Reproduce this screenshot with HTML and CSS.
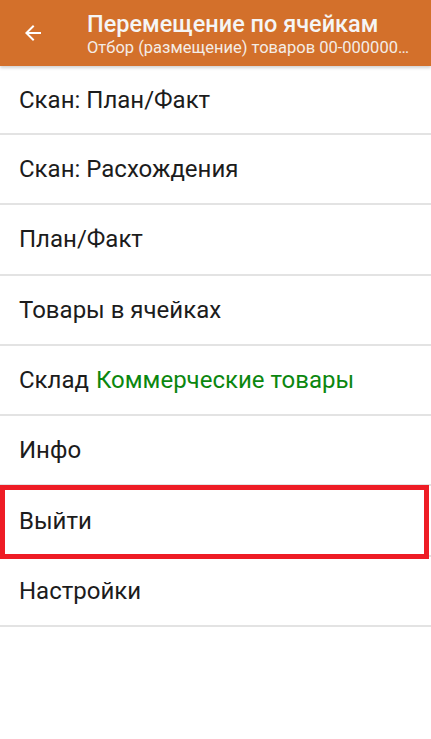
FILE: index.html
```html
<!DOCTYPE html>
<html lang="ru">
<head>
    <meta charset="UTF-8">
    <meta name="viewport" content="width=device-width, initial-scale=1.0">
    <title>Перемещение по ячейкам</title>
    <link rel="stylesheet" href="styles.css">
</head>
<body>
    <header class="toolbar">
        <button class="back" aria-label="Назад">
            <svg width="24" height="24" viewBox="0 0 24 24">
                <path d="M20 11H7.83l5.59-5.59L12 4l-8 8 8 8 1.41-1.41L7.83 13H20v-2z" fill="#fff"/>
            </svg>
        </button>
        <div class="titles">
            <div class="title">Перемещение по ячейкам</div>
            <div class="subtitle">Отбор (размещение) товаров 00-000000…</div>
        </div>
    </header>

    <ul class="menu">
        <li>Скан: План/Факт</li>
        <li>Скан: Расхождения</li>
        <li>План/Факт</li>
        <li>Товары в ячейках</li>
        <li>Склад <span class="green">Коммерческие товары</span></li>
        <li>Инфо</li>
        <li class="marked">Выйти</li>
        <li>Настройки</li>
    </ul>
</body>
</html>
```

FILE: styles.css
```css
body {
    margin: 0;
    font-family: Roboto, "Noto Sans", sans-serif;
    background-color: #fff;
    color: #1c1c1c;
}
.toolbar {
    display: flex;
    align-items: center;
    height: 66px;
    background-color: #d3702b;
    color: #fff;
    box-shadow: 0 2px 3px rgba(0, 0, 0, 0.18);
    position: relative;
    z-index: 1;
}
.back {
    width: 66px;
    height: 66px;
    border: none;
    background: none;
    padding: 0;
    display: flex;
    align-items: center;
    justify-content: center;
    flex-shrink: 0;
}
.titles {
    min-width: 0;
    padding-left: 21px;
    padding-right: 8px;
    padding-top: 2px;
}
.title {
    font-size: 23.5px;
    font-weight: 500;
    line-height: 28px;
    white-space: nowrap;
    color: #f5f5f5;
}
.subtitle {
    font-size: 16.5px;
    line-height: 20px;
    white-space: nowrap;
    color: #f3ece6;
}
.menu {
    list-style: none;
    margin: 0;
    padding: 0;
}
.menu li {
    height: 68.3px;
    border-bottom: 2px solid #e3e3e3;
    padding-left: 19px;
    display: flex;
    align-items: center;
    font-size: 24px;
    position: relative;
}
.menu li:first-child {
    height: 67px;
}
.green {
    color: #0b870f;
    margin-left: 7px;
}
.marked::after {
    content: "";
    position: absolute;
    left: 0;
    right: 2px;
    top: -1px;
    bottom: -4px;
    border: 5px solid #ee1c25;
}
```
